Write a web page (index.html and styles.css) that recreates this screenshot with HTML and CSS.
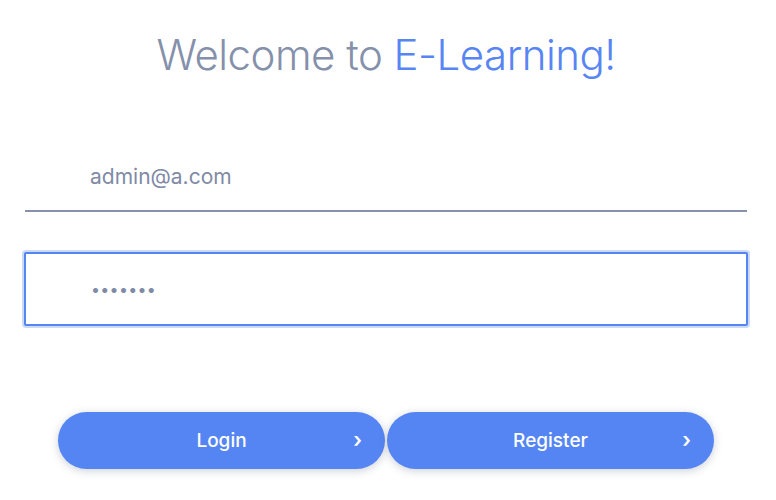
FILE: index.html
```html
<!DOCTYPE html>
<html>
<head>
<meta charset="utf-8">
<link rel="stylesheet" href="styles.css">
</head>
<body>
<main class="page">
  <h1 class="title">Welcome to <span class="accent">E-Learning!</span></h1>
  <form class="form">
    <input class="field field-line" type="email" value="admin@a.com">
    <input class="field field-box" type="password" value="1234567">
    <div class="actions">
      <button type="button" class="btn"><span class="btn-label">Login</span><span class="chev">&#x203A;</span></button>
      <button type="button" class="btn"><span class="btn-label">Register</span><span class="chev">&#x203A;</span></button>
    </div>
  </form>
</main>
</body>
</html>
```
FILE: styles.css
```css
* { box-sizing: border-box; }
html, body { margin: 0; padding: 0; background: #fff; }
body { font-family: Inter, "Noto Sans", sans-serif; }
.page { width: 776px; height: 500px; padding: 28px 28px 0 24px; display: flex; flex-direction: column; }
.title {
  margin: 0;
  text-align: center;
  font-size: 42px;
  font-weight: 300;
  color: #8590ab;
  letter-spacing: -0.5px;
  line-height: 54px;
}
.accent { color: #5785f4; }
.form { display: flex; flex-direction: column; margin-top: 82px; }
.field {
  font-family: Inter, sans-serif;
  color: #7f8aa6;
  outline: none;
  width: 724px;
  background: #fff;
}
.field-line {
  font-size: 21px;
  height: 48px;
  border: none;
  border-bottom: 2px solid #8891aa;
  padding: 0 0 22px 65px;
  margin-left: 1px;
  width: 722px;
}
.field-box {
  font-size: 16px;
  margin-top: 40px;
  height: 74px;
  border: 2px solid #5585f0;
  box-shadow: 0 0 0 2px rgba(85,133,240,0.3);
  border-radius: 2px;
  padding: 0 0 0 65px;
  letter-spacing: 0.3px;
}
.actions { display: flex; justify-content: center; gap: 2px; margin-top: 86px; }
.btn {
  width: 327px;
  height: 57px;
  border: none;
  border-radius: 29px;
  background: #5585f3;
  color: #fff;
  font-family: Inter, sans-serif;
  font-size: 19px;
  font-weight: 500;
  position: relative;
  box-shadow: 0 2px 8px rgba(60,70,100,0.25);
}
.chev { position: absolute; right: 23px; top: 50%; transform: translateY(-55%); font-size: 21px; font-weight: 600; }
```
